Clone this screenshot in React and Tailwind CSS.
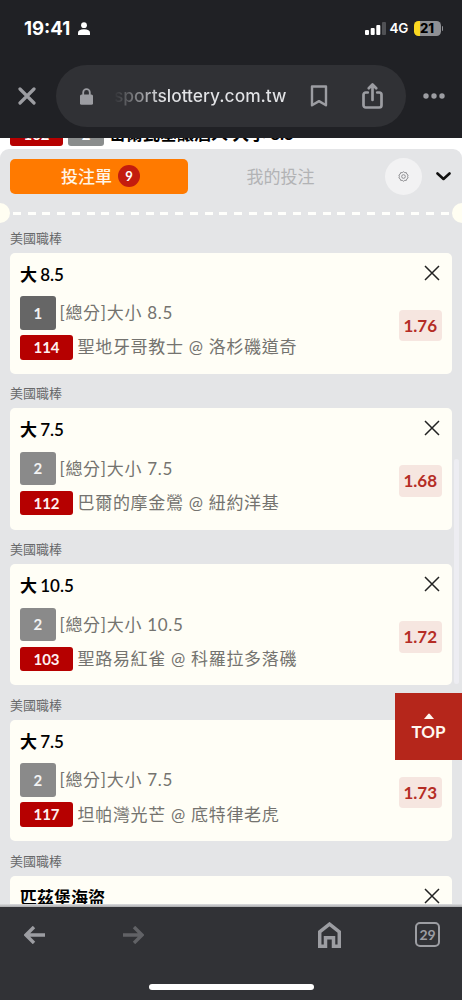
import clsx from 'clsx';

const BETS = [
  { title: '大 8.5', pick: '1', market: '[總分]大小 8.5', code: '114', match: '聖地牙哥教士 @ 洛杉磯道奇', odds: '1.76' },
  { title: '大 7.5', pick: '2', market: '[總分]大小 7.5', code: '112', match: '巴爾的摩金鶯 @ 紐約洋基', odds: '1.68' },
  { title: '大 10.5', pick: '2', market: '[總分]大小 10.5', code: '103', match: '聖路易紅雀 @ 科羅拉多落磯', odds: '1.72' },
  { title: '大 7.5', pick: '2', market: '[總分]大小 7.5', code: '117', match: '坦帕灣光芒 @ 底特律老虎', odds: '1.73' },
  { title: '匹茲堡海盜' },
];

function StatusBar() {
  return (
    <div className="flex h-14 items-center justify-between pl-6 pr-[19px]">
      <div className="flex items-center gap-1.5">
        <span className="w-[48px] whitespace-nowrap text-[18.6px] font-bold leading-6">
          19:41
        </span>
        <svg className="h-[13px] w-3" viewBox="0 0 12 13" fill="currentColor">
          <circle cx="6" cy="3.2" r="2.9" />
          <path d="M0 13v-2.2C0 8.6 2.2 7.2 6 7.2s6 1.4 6 3.6V13z" />
        </svg>
      </div>
      <div className="flex items-center">
        <svg className="h-[14px] w-[21px]" viewBox="0 0 21 14" fill="currentColor">
          <rect x="0" y="9" width="4" height="5" rx="1" />
          <rect x="5.7" y="7" width="4" height="7" rx="1" />
          <rect x="11.3" y="4" width="4" height="10" rx="1" />
          <rect x="17" y="1" width="4" height="13" rx="1" className="fill-[#505155]" />
        </svg>
        <span className="ml-1 w-[18px] whitespace-nowrap text-[13.5px] font-semibold leading-4 tracking-[-0.3px]">
          4G
        </span>
        <div className="ml-[6px] flex h-[15px] w-[27px] items-center justify-center rounded-[4.5px] bg-[linear-gradient(90deg,#fbd821_23%,#8f9094_23%)] text-[13px] font-extrabold leading-none text-black">
          21
        </div>
        <div className="ml-px h-[5px] w-[1.5px] rounded-r bg-[#8f9094]" />
      </div>
    </div>
  );
}

function AddressBar() {
  return (
    <div className="mt-[9px] flex h-[62px] items-center text-[#9c9da2]">
      <svg className="ml-[18px] h-[18px] w-[18px]" viewBox="0 0 18 18" fill="none" stroke="currentColor" strokeWidth="3.2" strokeLinecap="round">
        <path d="M2 2l14 14M16 2L2 16" />
      </svg>
      <div className="ml-5 flex h-full w-[350px] items-center rounded-full bg-[#303135]">
        <svg className="ml-6 h-[17px] w-[13px]" viewBox="0 0 13 17">
          <path d="M3.2 8V4.5a3.3 3.3 0 0 1 6.6 0V8" fill="none" stroke="currentColor" strokeWidth="1.8" />
          <rect y="6.5" width="13" height="10.3" rx="1.6" fill="currentColor" />
        </svg>
        <span className="ml-[21px] w-[173px] whitespace-nowrap bg-[linear-gradient(90deg,#303135,#e2e3e6_28%)] bg-clip-text text-[17.4px] font-medium leading-6 text-transparent">
          sportslottery.com.tw
        </span>
        <svg className="ml-[23px] h-[22px] w-[18px]" viewBox="0 0 18 22" fill="none" stroke="currentColor" strokeWidth="2.4" strokeLinejoin="round">
          <path d="M2 1.5h14v18.8l-7-4.2-7 4.2z" />
        </svg>
        <svg className="ml-[34px] h-[26px] w-[21px]" viewBox="0 0 21 26" fill="none" stroke="currentColor" strokeWidth="2.7" strokeLinecap="round" strokeLinejoin="round">
          <path d="M5.8 9.5H3.7A2.2 2.2 0 0 0 1.5 11.7v10.6a2.2 2.2 0 0 0 2.2 2.2h13.6a2.2 2.2 0 0 0 2.2-2.2V11.7a2.2 2.2 0 0 0-2.2-2.2h-2.1" />
          <path d="M10.5 17V2M6.8 5.2l3.7-3.7 3.7 3.7" />
        </svg>
      </div>
      <svg className="ml-[17px] h-[6px] w-[22px]" viewBox="0 0 22 6" fill="currentColor">
        <circle cx="3" cy="3" r="2.7" />
        <circle cx="11" cy="3" r="2.7" />
        <circle cx="19" cy="3" r="2.7" />
      </svg>
    </div>
  );
}

function CloseIcon() {
  return (
    <svg className="h-4 w-4" viewBox="0 0 16 16" fill="none" stroke="#222" strokeWidth="1.5">
      <path d="M1 1l14 14M15 1L1 15" />
    </svg>
  );
}

function BetCard({ title, pick, market, code, match, odds }) {
  return (
    <div className="h-[155.75px] px-[10px]">
      <div className="h-[34.5px] pt-[9.5px] text-[13px] leading-5 text-[#68696b]">
        美國職棒
      </div>
      <div className="flex h-[121.25px] justify-between rounded-[5px] bg-[#fffef6] px-[10px]">
        <div>
          <div className="h-[43.5px] whitespace-nowrap pt-[10px] text-[17px] font-semibold leading-6 text-black [word-spacing:-1px]">
            {title}
          </div>
          {pick && (
            <>
              <div className="flex h-[39px] items-start">
                <span
                  className={clsx(
                    'flex h-[33.5px] w-[35.5px] items-center justify-center rounded-[3px] text-[15px] font-bold text-[#f3f3f3]',
                    pick === '1' ? 'bg-[#666]' : 'bg-[#8a8a8a]'
                  )}
                >
                  {pick}
                </span>
                <span className="ml-1 whitespace-nowrap text-[17px] leading-[33px] tracking-[0.7px] text-[#74736f]">
                  {market}
                </span>
              </div>
              <div className="flex items-center">
                <span className="flex h-[24.5px] w-[53px] items-center justify-center rounded-[3px] bg-[#b60000] text-[15px] font-bold text-[#fff0f0]">
                  {code}
                </span>
                <span className="ml-[4.5px] whitespace-nowrap text-[17px] leading-6 tracking-[0.7px] text-[#74736f]">
                  {match}
                </span>
              </div>
            </>
          )}
        </div>
        <div className="flex flex-col items-end pt-3">
          <div className="mr-[2.5px]">
            <CloseIcon />
          </div>
          {odds && (
            <div className="mt-[29px] flex h-[31.5px] w-[43.5px] items-center justify-center rounded-[4px] bg-[#f6e6e0] text-[17px] font-bold text-[#b52d25]">
              {odds}
            </div>
          )}
        </div>
      </div>
    </div>
  );
}

function SlipHeader() {
  return (
    <div className="relative h-[69.2px] pt-[10px]">
      <div className="flex h-[34.5px] items-center pl-[10px]">
        <div className="flex h-full w-[178px] items-center justify-center gap-1.5 rounded-[5px] bg-[#ff7a00] pl-[3px] text-[17px] font-medium text-[#fff4e5]">
          投注單
          <span className="flex h-[22px] w-[22px] items-center justify-center rounded-full bg-[#c31c0e] text-[13px] font-bold text-white">
            9
          </span>
        </div>
        <div className="w-[185px] text-center text-[17px] text-[#b2b3b5]">
          我的投注
        </div>
        <div className="ml-3 flex h-[37px] w-[37px] shrink-0 items-center justify-center rounded-full bg-[#f2f2f3]">
          <svg className="h-[11px] w-[11px]" viewBox="0 0 24 24" fill="none" stroke="#88888b" strokeWidth="2">
            <path d="M9.2 3.6L12 1.6l2.8 2 3.4-.1 1 3.3 2.8 2L21 12l1 3.2-2.8 2-1 3.3-3.4-.1-2.8 2-2.8-2-3.4.1-1-3.3-2.8-2L3 12 2 8.8l2.8-2 1-3.3z" />
            <circle cx="12" cy="12" r="4" />
          </svg>
        </div>
        <svg className="ml-[14px] h-[9px] w-[15px]" viewBox="0 0 15 9" fill="none" stroke="#111" strokeWidth="2.6" strokeLinecap="round" strokeLinejoin="round">
          <path d="M1.5 1.5l6 5.5 6-5.5" />
        </svg>
      </div>
      <div className="mt-[18.5px] ml-[13px] h-[3px] w-[437px] bg-[repeating-linear-gradient(90deg,#fffffc_0_8px,transparent_8px_14.75px)]" />
      <div className="absolute -left-[10px] top-[54px] h-5 w-5 rounded-full bg-[#fffef2]" />
      <div className="absolute -right-[10px] top-[54px] h-5 w-5 rounded-full bg-[#fffef2]" />
    </div>
  );
}

function Toolbar() {
  return (
    <div className="relative h-[93px] bg-[#313236] text-[#9c9da2]">
      <div className="flex h-[55px] items-center">
        <svg className="ml-6 h-[18px] w-[21px]" viewBox="0 0 21 18" fill="none" stroke="currentColor" strokeWidth="3.4">
          <path d="M2 9h19M10 1L2 9l8 8" />
        </svg>
        <svg className="ml-[77.5px] h-[18px] w-[21px] text-[#616266]" viewBox="0 0 21 18" fill="none" stroke="currentColor" strokeWidth="3.4">
          <path d="M19 9H0M11 1l8 8-8 8" />
        </svg>
        <svg className="ml-[174px] h-[26px] w-[23px]" viewBox="0 0 23 26" fill="none" stroke="currentColor" strokeWidth="3.5">
          <path d="M1.7 9.8L11.5 2.1l9.8 7.7v14.5h-5.8v-8.6h-8v8.6H1.7z" />
        </svg>
        <div className="ml-[74.5px] flex h-[25px] w-[25px] items-center justify-center rounded-[5px] border-2 border-[#9c9da2] text-[14px] font-bold leading-none">
          29
        </div>
      </div>
      <div className="mx-auto mt-[22px] h-[6px] w-[165px] rounded-full bg-white" />
    </div>
  );
}

export default function App() {
  return (
    <div className="relative flex h-[1000px] w-[462px] flex-col overflow-hidden bg-white font-['Lato','Noto_Sans_CJK_TC',sans-serif]">
      <header className="h-[138px] shrink-0 bg-[#202125] font-['Inter',sans-serif] text-white">
        <StatusBar />
        <AddressBar />
      </header>
      <main className="h-[769px] shrink-0 overflow-hidden">
        {/* last row of the list behind the slip, mostly scrolled away */}
        <div className="h-[11px] overflow-hidden">
          <div className="-mt-[16.5px] flex h-[24.5px] items-center pl-[10px]">
            <span className="flex h-full w-[53px] items-center justify-center rounded-[3px] bg-[#b60000] text-[15px] font-bold text-white">
              102
            </span>
            <span className="ml-[5px] flex h-full w-[36px] items-center justify-center rounded-[3px] bg-[#8a8d8d] text-[15px] font-bold text-white">
              2
            </span>
            <span className="ml-[5px] whitespace-nowrap text-[17px] font-bold leading-6 text-black">
              密爾瓦基釀酒人 大小 8.5
            </span>
          </div>
        </div>
        <section className="h-[758px] overflow-hidden rounded-t-[9px] bg-[#e4e5e7]">
          <SlipHeader />
          {BETS.map((bet, i) => (
            <BetCard key={i} {...bet} />
          ))}
        </section>
      </main>
      <div className="absolute right-[3.5px] top-[459px] h-[225px] w-[5px] rounded-full bg-[#ededf2]" />
      <button className="absolute right-0 top-[693px] flex h-[67px] w-[67px] flex-col items-center bg-[#b5261b] pt-[20px] text-[17px] font-bold leading-[23px] text-[#fff8f0]">
        <svg className="h-[6px] w-[10px]" viewBox="0 0 10 6" fill="currentColor">
          <path d="M0 6l4.2-5q.8-.8 1.6 0L10 6z" />
        </svg>
        <span className="mt-[1px]">TOP</span>
      </button>
      <div className="absolute top-[904px] h-[3px] w-full bg-linear-to-b from-[#dcdddf] to-[#a9aaac]" />
      <Toolbar />
    </div>
  );
}
